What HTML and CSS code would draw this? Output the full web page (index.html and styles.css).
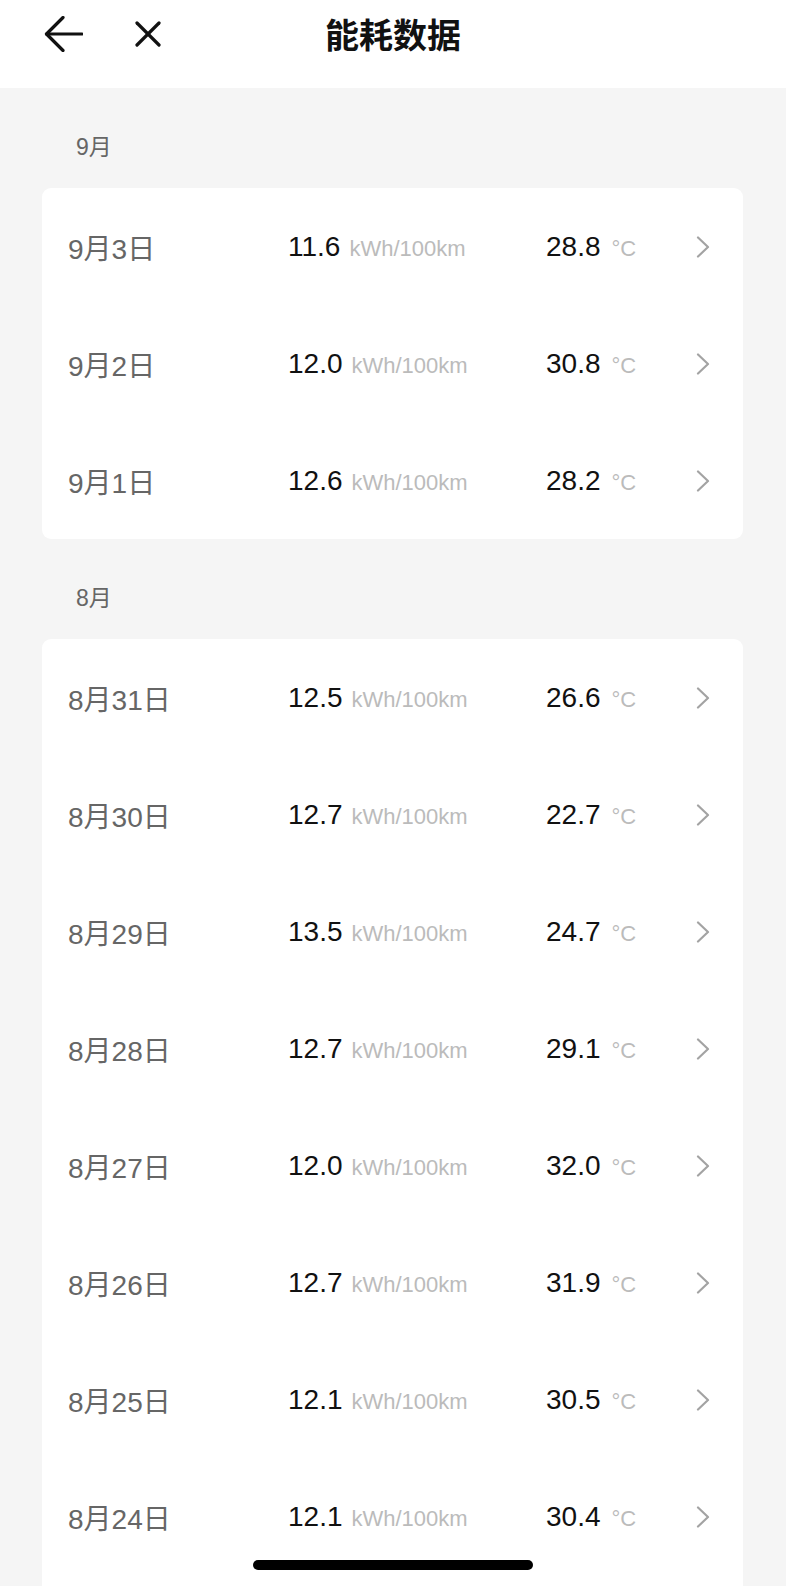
FILE: index.html
```html
<!DOCTYPE html>
<html>
  <head>
    <title>能耗数据</title>
    <meta charset="utf-8" />
    <link rel="stylesheet" href="styles.css">
  </head>
  <body>
    <div class="topbar">
      <div class="nav">
        <svg class="back" width="40" height="36" viewBox="0 0 40 36">
          <polyline points="20,1.5 3.5,18 20,34.5" fill="none" stroke="#111" stroke-width="3.2" stroke-linecap="round" stroke-linejoin="round"/>
          <line x1="3.5" y1="18" x2="39" y2="18" stroke="#111" stroke-width="3.2" stroke-linecap="round"/>
        </svg>
        <svg class="close" width="26" height="26" viewBox="0 0 26 26">
          <line x1="2" y1="2" x2="24" y2="24" stroke="#111" stroke-width="3.2" stroke-linecap="round"/>
          <line x1="24" y1="2" x2="2" y2="24" stroke="#111" stroke-width="3.2" stroke-linecap="round"/>
        </svg>
      </div>
      <div class="title">能耗数据</div>
      <div></div>
    </div>

    <div class="month">9月</div>
    <div class="card">
      <div class="row"><span class="date">9月3日</span><span class="val">11.6<small>kWh/100km</small></span><span class="val">28.8<small class="deg">°C</small></span><svg class="go" width="14" height="22" viewBox="0 0 14 22"><polyline points="2,1.5 12,11 2,20.5" fill="none" stroke="#a3a3a3" stroke-width="2.2" stroke-linecap="round" stroke-linejoin="round"/></svg></div>
      <div class="row"><span class="date">9月2日</span><span class="val">12.0<small>kWh/100km</small></span><span class="val">30.8<small class="deg">°C</small></span><svg class="go" width="14" height="22" viewBox="0 0 14 22"><polyline points="2,1.5 12,11 2,20.5" fill="none" stroke="#a3a3a3" stroke-width="2.2" stroke-linecap="round" stroke-linejoin="round"/></svg></div>
      <div class="row"><span class="date">9月1日</span><span class="val">12.6<small>kWh/100km</small></span><span class="val">28.2<small class="deg">°C</small></span><svg class="go" width="14" height="22" viewBox="0 0 14 22"><polyline points="2,1.5 12,11 2,20.5" fill="none" stroke="#a3a3a3" stroke-width="2.2" stroke-linecap="round" stroke-linejoin="round"/></svg></div>
    </div>

    <div class="month">8月</div>
    <div class="card tail">
      <div class="row"><span class="date">8月31日</span><span class="val">12.5<small>kWh/100km</small></span><span class="val">26.6<small class="deg">°C</small></span><svg class="go" width="14" height="22" viewBox="0 0 14 22"><polyline points="2,1.5 12,11 2,20.5" fill="none" stroke="#a3a3a3" stroke-width="2.2" stroke-linecap="round" stroke-linejoin="round"/></svg></div>
      <div class="row"><span class="date">8月30日</span><span class="val">12.7<small>kWh/100km</small></span><span class="val">22.7<small class="deg">°C</small></span><svg class="go" width="14" height="22" viewBox="0 0 14 22"><polyline points="2,1.5 12,11 2,20.5" fill="none" stroke="#a3a3a3" stroke-width="2.2" stroke-linecap="round" stroke-linejoin="round"/></svg></div>
      <div class="row"><span class="date">8月29日</span><span class="val">13.5<small>kWh/100km</small></span><span class="val">24.7<small class="deg">°C</small></span><svg class="go" width="14" height="22" viewBox="0 0 14 22"><polyline points="2,1.5 12,11 2,20.5" fill="none" stroke="#a3a3a3" stroke-width="2.2" stroke-linecap="round" stroke-linejoin="round"/></svg></div>
      <div class="row"><span class="date">8月28日</span><span class="val">12.7<small>kWh/100km</small></span><span class="val">29.1<small class="deg">°C</small></span><svg class="go" width="14" height="22" viewBox="0 0 14 22"><polyline points="2,1.5 12,11 2,20.5" fill="none" stroke="#a3a3a3" stroke-width="2.2" stroke-linecap="round" stroke-linejoin="round"/></svg></div>
      <div class="row"><span class="date">8月27日</span><span class="val">12.0<small>kWh/100km</small></span><span class="val">32.0<small class="deg">°C</small></span><svg class="go" width="14" height="22" viewBox="0 0 14 22"><polyline points="2,1.5 12,11 2,20.5" fill="none" stroke="#a3a3a3" stroke-width="2.2" stroke-linecap="round" stroke-linejoin="round"/></svg></div>
      <div class="row"><span class="date">8月26日</span><span class="val">12.7<small>kWh/100km</small></span><span class="val">31.9<small class="deg">°C</small></span><svg class="go" width="14" height="22" viewBox="0 0 14 22"><polyline points="2,1.5 12,11 2,20.5" fill="none" stroke="#a3a3a3" stroke-width="2.2" stroke-linecap="round" stroke-linejoin="round"/></svg></div>
      <div class="row"><span class="date">8月25日</span><span class="val">12.1<small>kWh/100km</small></span><span class="val">30.5<small class="deg">°C</small></span><svg class="go" width="14" height="22" viewBox="0 0 14 22"><polyline points="2,1.5 12,11 2,20.5" fill="none" stroke="#a3a3a3" stroke-width="2.2" stroke-linecap="round" stroke-linejoin="round"/></svg></div>
      <div class="row"><span class="date">8月24日</span><span class="val">12.1<small>kWh/100km</small></span><span class="val">30.4<small class="deg">°C</small></span><svg class="go" width="14" height="22" viewBox="0 0 14 22"><polyline points="2,1.5 12,11 2,20.5" fill="none" stroke="#a3a3a3" stroke-width="2.2" stroke-linecap="round" stroke-linejoin="round"/></svg></div>
    </div>

    <div class="home-bar"></div>
  </body>
</html>
```

FILE: styles.css
```css
html, body {
    height: 1586px;
    overflow: hidden; }

body {
    margin: 0;
    background: #f5f5f5;
    font-family: "Liberation Sans", "Noto Sans CJK SC", sans-serif;
    color: #111; }

div.topbar {
    height: 88px;
    background: #fff;
    display: grid;
    grid-template-columns: 1fr auto 1fr;
    align-items: center; }

div.topbar div.nav {
    display: flex;
    align-items: center;
    padding-left: 43px;
    margin-top: -20px; }

div.topbar svg.close {
    margin-left: 52px; }

div.topbar div.title {
    font-family: "Noto Sans CJK SC", sans-serif;
    font-weight: bold;
    font-size: 34px;
    line-height: 40px;
    margin-top: -20px; }

div.month {
    padding: 47px 0 29px 76px;
    font-size: 23px;
    line-height: 24px;
    color: #666; }

div.card {
    margin: 0 43px 0 42px;
    background: #fff;
    border-radius: 9px; }

div.card.tail {
    padding-bottom: 60px; }

div.row {
    height: 117px;
    display: grid;
    grid-template-columns: 220px 258px 1fr auto;
    align-items: center;
    padding: 0 33px 0 26px; }

span.date {
    font-size: 28px;
    color: #666; }

span.val {
    font-size: 28px;
    color: #111; }

span.val small {
    font-size: 22px;
    color: #bbb;
    margin-left: 9px; }

span.val small.deg {
    margin-left: 11px; }

svg.go {
    display: block; }

div.home-bar {
    position: fixed;
    left: 253px;
    bottom: 16px;
    width: 280px;
    height: 10px;
    border-radius: 5px;
    background: #000; }
```
